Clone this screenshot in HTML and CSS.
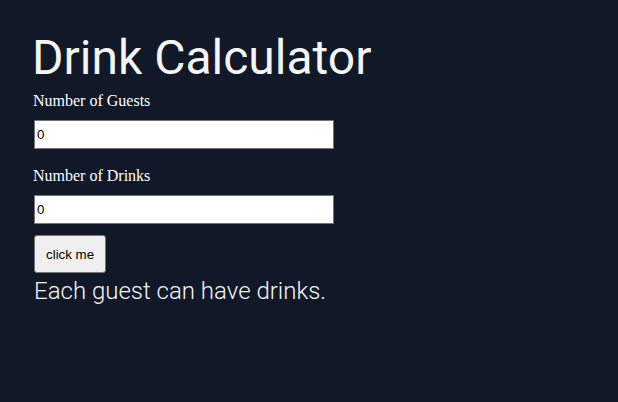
FILE: index.html
```html
<!DOCTYPE html>
<html>
<head>
<meta charset="utf-8">
<link rel="stylesheet" href="styles.css">
</head>
<body>
<main class="page">
  <h1 class="title">Drink Calculator</h1>
  <label class="label label-first" for="guests">Number of Guests</label>
  <input class="field" id="guests" type="text" value="0">
  <label class="label" for="drinks">Number of Drinks</label>
  <input class="field" id="drinks" type="text" value="0">
  <button class="btn" type="button">click me</button>
  <p class="result">Each guest can have drinks.</p>
</main>
</body>
</html>
```
FILE: styles.css
```css
html, body {
  margin: 0;
  padding: 0;
  background: #111827;
  height: 100%;
}
.page {
  padding: 34px 32px 32px;
  display: flex;
  flex-direction: column;
  align-items: flex-start;
  color: #f3f4f6;
}
.title {
  margin: 0;
  font-family: Roboto, sans-serif;
  font-weight: 400;
  font-size: 48px;
  line-height: 48px;
  color: #f5f5f5;
}
.label {
  font-family: "Liberation Serif", serif;
  font-size: 16px;
  line-height: 18px;
  color: #ffffff;
  margin: 18px 0 10px 1px;
}
.label-first {
  margin-top: 10px;
}
.field {
  box-sizing: border-box;
  width: 300px;
  height: 29px;
  margin: 0 0 0 2px;
  padding: 1px 2px;
  border: 1px solid #767676;
  border-radius: 0;
  background: #ffffff;
  font-family: "Liberation Sans", Arial, sans-serif;
  font-size: 13.33px;
  color: #000;
}
.btn {
  margin: 11px 0 0 2px;
  box-sizing: border-box;
  height: 38px;
  padding: 0 11px;
  border: 1px solid #767676;
  border-radius: 3px;
  background: #efefef;
  font-family: "Liberation Sans", Arial, sans-serif;
  font-size: 13.33px;
  color: #000;
}
.result {
  margin: 4px 0 0 2px;
  font-family: Roboto, sans-serif;
  font-weight: 300;
  font-size: 24px;
  line-height: 28px;
  color: #f5f5f5;
}
```
